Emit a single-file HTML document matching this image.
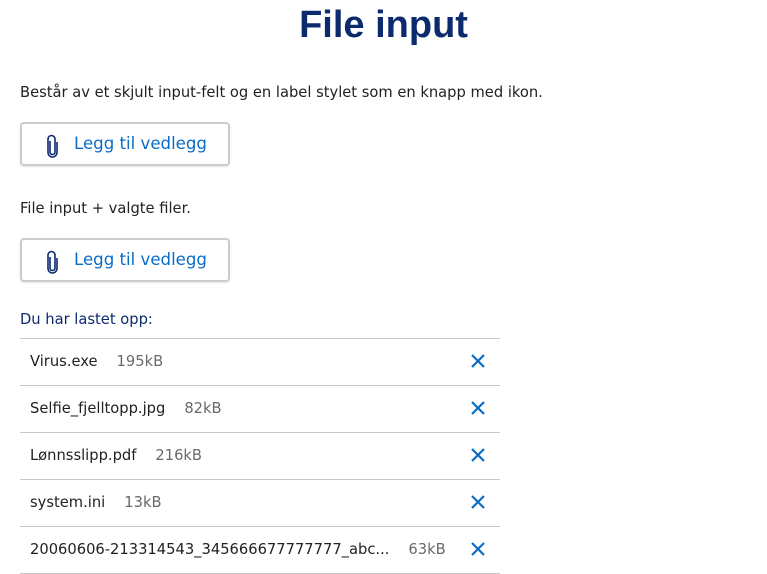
<!DOCTYPE html>
<html><head><meta charset="utf-8"><style>
body{margin:0;width:767px;height:574px;background:#fff;font-family:"DejaVu Sans",sans-serif;color:#222;position:relative;overflow:hidden}
.a{position:absolute;white-space:nowrap}
h1{position:absolute;left:0;width:767px;top:4px;margin:0;text-align:center;font-family:"Liberation Sans",sans-serif;font-size:38px;font-weight:bold;color:#0c2a6e}
.p{font-size:14.7px;color:#222}
.btn{position:absolute;left:20px;width:206px;height:40px;border:2px solid #ccc;border-radius:4px;background:#fff;box-shadow:0 1px 2px rgba(0,0,0,.1)}
.btn svg{position:absolute;left:23px;top:10px}
.btn span{position:absolute;left:52px;top:10px;font-size:16.6px;color:#0a6cc6}
.row{position:absolute;left:20px;width:480px;height:46px;border-bottom:1px solid #c8c8c8;font-size:14.7px}
.row .n{position:absolute;left:10px;top:14px}
.row .s{color:#6a6a6a;margin-left:19px}
.row svg{position:absolute;left:450px;top:14px}
</style></head><body>
<h1>File input</h1>
<div class="a p" style="left:20px;top:84px">Består av et skjult input-felt og en label stylet som en knapp med ikon.</div>
<div class="btn" style="top:122px"><svg width="14" height="24" viewBox="0 0 14 24"><path d="M5 7v11a2.5 2.5 0 0 0 5 0V5a3.5 3.5 0 0 0-7 0v13.5a4.5 4.5 0 0 0 9 0V8" fill="none" stroke="#0c2a6e" stroke-width="1.6"/></svg><span>Legg til vedlegg</span></div>
<div class="a p" style="left:20px;top:200px">File input + valgte filer.</div>
<div class="btn" style="top:238px"><svg width="14" height="24" viewBox="0 0 14 24"><path d="M5 7v11a2.5 2.5 0 0 0 5 0V5a3.5 3.5 0 0 0-7 0v13.5a4.5 4.5 0 0 0 9 0V8" fill="none" stroke="#0c2a6e" stroke-width="1.6"/></svg><span>Legg til vedlegg</span></div>
<div class="a" style="left:20px;top:311px;font-size:14.7px;color:#0c2a6e">Du har lastet opp:</div>
<div style="position:absolute;left:20px;top:338px;width:480px;border-top:1px solid #c8c8c8"></div>
<div class="row" style="top:339px"><div class="n">Virus.exe<span class="s">195kB</span></div><svg width="16" height="16" viewBox="0 0 16 16"><path d="M2 2l12 12M14 2L2 14" stroke="#0a6cc6" stroke-width="2.2"/></svg></div>
<div class="row" style="top:386px"><div class="n">Selfie_fjelltopp.jpg<span class="s">82kB</span></div><svg width="16" height="16" viewBox="0 0 16 16"><path d="M2 2l12 12M14 2L2 14" stroke="#0a6cc6" stroke-width="2.2"/></svg></div>
<div class="row" style="top:433px"><div class="n">Lønnsslipp.pdf<span class="s">216kB</span></div><svg width="16" height="16" viewBox="0 0 16 16"><path d="M2 2l12 12M14 2L2 14" stroke="#0a6cc6" stroke-width="2.2"/></svg></div>
<div class="row" style="top:480px"><div class="n">system.ini<span class="s">13kB</span></div><svg width="16" height="16" viewBox="0 0 16 16"><path d="M2 2l12 12M14 2L2 14" stroke="#0a6cc6" stroke-width="2.2"/></svg></div>
<div class="row" style="top:527px"><div class="n">20060606-213314543_345666677777777_abc...<span class="s">63kB</span></div><svg width="16" height="16" viewBox="0 0 16 16"><path d="M2 2l12 12M14 2L2 14" stroke="#0a6cc6" stroke-width="2.2"/></svg></div>
</body></html>
